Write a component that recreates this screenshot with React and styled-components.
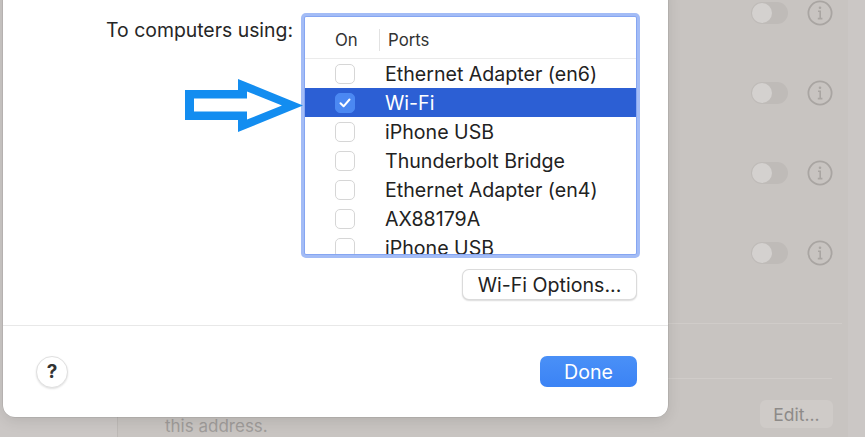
import React from 'react';
import styled, { createGlobalStyle } from 'styled-components';

const Global = createGlobalStyle`
  html, body { margin: 0; padding: 0; }
  body {
    width: 865px; height: 437px; overflow: hidden;
    background: #cbc7c5;
    font-family: Inter, "Noto Sans", "Liberation Sans", sans-serif;
    -webkit-font-smoothing: antialiased;
  }
`;

const Page = styled.div`
  position: relative;
  width: 865px;
  height: 437px;
  overflow: hidden;
  background: #cbc7c5;
  display: flex;
`;

/* ---------- background settings panel (dimmed) ---------- */
const Backdrop = styled.div`
  margin-left: 117px;
  width: 731px;
  height: 100%;
  box-sizing: border-box;
  background: #c8c4c1;
  border-left: 1px solid #bdb9b6;
  display: flex;
  flex-direction: column;
`;

const ToggleList = styled.div`
  margin-top: -27px;
  display: flex;
  flex-direction: column;
`;

const ToggleRow = styled.div`
  height: 80px;
  display: flex;
  align-items: center;
  justify-content: flex-end;
  gap: 19px;
  padding-right: 15px;
`;

const Toggle = styled.div`
  position: relative;
  width: 37px;
  height: 22px;
  border-radius: 11px;
  background: #bfbbb8;
  &::before {
    content: '';
    position: absolute;
    left: 1px;
    top: 1px;
    width: 20px;
    height: 20px;
    border-radius: 50%;
    background: #d4d1cf;
  }
`;

const PanelLine = styled.div`
  margin-top: ${p => p.$top}px;
  margin-left: 48px;
  margin-right: ${p => p.$right}px;
  height: 1px;
  background: #d0ccc9;
`;

const BottomRow = styled.div`
  margin-top: 21px;
  display: flex;
  justify-content: space-between;
  align-items: flex-start;
  padding: 0 15px 0 47px;
`;

const Description = styled.div`
  margin-top: 15px;
  font-size: 17px;
  line-height: 22px;
  color: #9f9c9a;
`;

const EditButton = styled.div`
  width: 73px;
  height: 28px;
  box-sizing: border-box;
  border-radius: 6px;
  background: #cfcbc8;
  color: #8d8a88;
  font-size: 17.5px;
  display: flex;
  align-items: center;
  justify-content: center;
`;

const InfoIcon = () => (
  <svg width="26" height="26" viewBox="0 0 26 26">
    <circle cx="13" cy="13" r="11.6" fill="none" stroke="#a9a5a2" strokeWidth="1.8" />
    <circle cx="13" cy="7.8" r="1.3" fill="#a9a5a2" />
    <path d="M11 11.2H13.2V18.4M10.8 18.6H15.4" fill="none" stroke="#a9a5a2" strokeWidth="1.6" />
  </svg>
);

/* ---------- sheet dialog ---------- */
const Sheet = styled.div`
  position: absolute;
  left: 3px;
  top: -20px;
  bottom: 20px;
  width: 665px;
  background: #ffffff;
  border-radius: 12px;
  box-shadow: 0 0 0 0.5px rgba(0,0,0,0.12), 0 4px 14px rgba(0,0,0,0.10);
  display: flex;
  flex-direction: column;
`;

const SheetBody = styled.div`
  padding: 36px 31px 0 0;
  display: flex;
  flex-direction: column;
  align-items: flex-end;
`;

const PortsRow = styled.div`
  display: flex;
  align-items: flex-start;
  gap: 11px;
`;

const FieldLabel = styled.div`
  margin-top: 2px;
  font-size: 19.4px;
  line-height: 24px;
  color: #262626;
`;

const ListBox = styled.div`
  width: 333px;
  height: 239px;
  box-sizing: border-box;
  border: 1px solid #86a6f2;
  box-shadow: 0 0 0 3px #a3bcf6;
  border-radius: 2px;
  overflow: hidden;
  background: #fff;
`;

const ListHeader = styled.div`
  height: 42px;
  box-sizing: border-box;
  padding: 5px 0 0 30px;
  display: flex;
  align-items: center;
  border-bottom: 1px solid #ebebeb;
  font-size: 16.8px;
  color: #333;
`;

const HeaderOn = styled.div`
  width: 44px;
`;

const HeaderSep = styled.div`
  width: 1px;
  height: 22px;
  background: #e2e2e2;
`;

const HeaderPorts = styled.div`
  margin-left: 8px;
`;

const PortRow = styled.div`
  height: 29px;
  display: flex;
  align-items: center;
  padding-left: 30px;
  gap: 30px;
  font-size: 19.6px;
  white-space: nowrap;
  color: ${p => (p.$selected ? '#ffffff' : '#222222')};
  background: ${p => (p.$selected ? '#2c5fd4' : 'transparent')};
`;

const Check = styled.div`
  width: 20px;
  height: 20px;
  box-sizing: border-box;
  border-radius: 5px;
  border: 1px solid ${p => (p.$on ? '#4b88f2' : '#d6d6d6')};
  background: ${p => (p.$on ? '#4b88f2' : '#ffffff')};
  display: flex;
  align-items: center;
  justify-content: center;
  flex-shrink: 0;
`;

const OptionsButton = styled.div`
  margin-top: 14px;
  width: 175px;
  height: 31px;
  box-sizing: border-box;
  border-radius: 7px;
  border: 0.5px solid rgba(0,0,0,0.14);
  box-shadow: 0 1px 1.5px rgba(0,0,0,0.14);
  background: #fff;
  font-size: 19.6px;
  color: #222;
  display: flex;
  align-items: center;
  justify-content: center;
`;

const SheetDivider = styled.div`
  margin-top: 25px;
  height: 1px;
  background: #e8e8e8;
`;

const Footer = styled.div`
  flex: 1;
  display: flex;
  align-items: center;
  justify-content: space-between;
  padding: 0 31px 0 33px;
`;

const HelpButton = styled.div`
  width: 32px;
  height: 32px;
  box-sizing: border-box;
  border-radius: 50%;
  border: 1px solid #e0e0e0;
  box-shadow: 0 1px 2px rgba(0,0,0,0.12);
  background: #fff;
  font-size: 19px;
  font-weight: 700;
  color: #333;
  display: flex;
  align-items: center;
  justify-content: center;
`;

const DoneButton = styled.div`
  width: 97px;
  height: 31px;
  border-radius: 7px;
  background: linear-gradient(#4a90f7, #3b83f5);
  color: #fff;
  font-size: 19.6px;
  display: flex;
  align-items: center;
  justify-content: center;
`;

const ArrowMark = styled.svg`
  position: absolute;
  left: 185px;
  top: 79px;
`;

const ports = [
  { name: 'Ethernet Adapter (en6)' },
  { name: 'Wi-Fi', on: true, selected: true },
  { name: 'iPhone USB' },
  { name: 'Thunderbolt Bridge' },
  { name: 'Ethernet Adapter (en4)' },
  { name: 'AX88179A' },
  { name: 'iPhone USB' },
];

export default function App() {
  return (
    <>
      <Global />
      <Page>
        <Backdrop>
          <ToggleList>
            {[0, 1, 2, 3].map(i => (
              <ToggleRow key={i}>
                <Toggle />
                <InfoIcon />
              </ToggleRow>
            ))}
          </ToggleList>
          <PanelLine $top={30} $right={6} />
          <PanelLine $top={54} $right={16} />
          <BottomRow>
            <Description>this address.</Description>
            <EditButton>Edit...</EditButton>
          </BottomRow>
        </Backdrop>

        <Sheet>
          <SheetBody>
            <PortsRow>
              <FieldLabel>To computers using:</FieldLabel>
              <ListBox>
                <ListHeader>
                  <HeaderOn>On</HeaderOn>
                  <HeaderSep />
                  <HeaderPorts>Ports</HeaderPorts>
                </ListHeader>
                {ports.map((p, i) => (
                  <PortRow key={i} $selected={p.selected}>
                    <Check $on={p.on}>
                      {p.on && (
                        <svg width="14" height="14" viewBox="0 0 14 14">
                          <path d="M2.5 7.3L5.6 10.3L11.5 3.5" fill="none" stroke="#fff" strokeWidth="2" strokeLinecap="round" strokeLinejoin="round" />
                        </svg>
                      )}
                    </Check>
                    <span>{p.name}</span>
                  </PortRow>
                ))}
              </ListBox>
            </PortsRow>
            <OptionsButton>Wi-Fi Options...</OptionsButton>
          </SheetBody>
          <SheetDivider />
          <Footer>
            <HelpButton>?</HelpButton>
            <DoneButton>Done</DoneButton>
          </Footer>
        </Sheet>

        <ArrowMark width="118" height="54" viewBox="0 0 118 54">
          <path
            fillRule="evenodd"
            fill="#138df0"
            d="M0 11H53V0L118 26.5L53 53V41H0Z M9 19.5H62V12.5L97 26.5L62 40.5V32.5H9Z"
          />
        </ArrowMark>
      </Page>
    </>
  );
}
